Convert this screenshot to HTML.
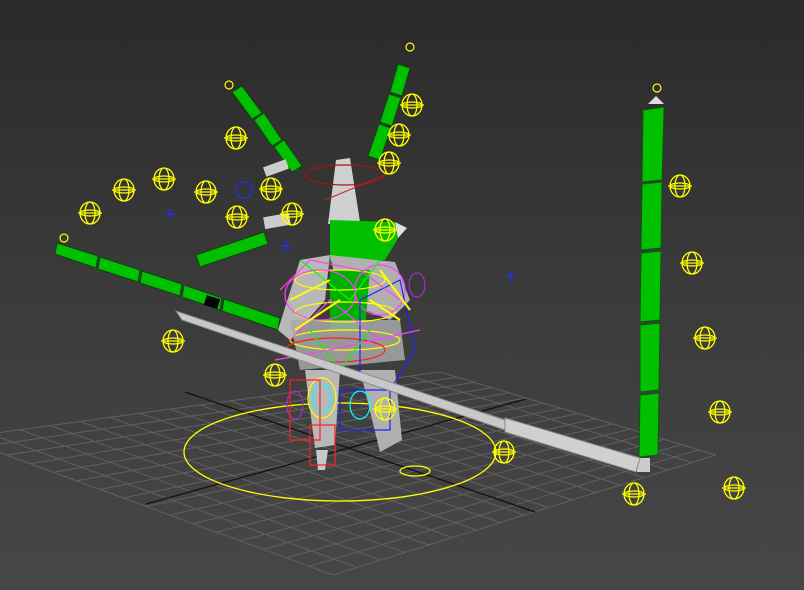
<!DOCTYPE html>
<html><head><meta charset="utf-8"><style>
html,body{margin:0;padding:0;width:804px;height:590px;overflow:hidden;background:#3a3a3a}
svg{display:block}
</style></head><body>
<svg id="s" width="804" height="590" viewBox="0 0 804 590" xmlns="http://www.w3.org/2000/svg">
<defs>
<linearGradient id="bg" x1="0" y1="0" x2="0" y2="1">
<stop offset="0" stop-color="#2a2a2a"/><stop offset="0.5" stop-color="#3b3b3b"/><stop offset="1" stop-color="#474747"/>
</linearGradient>
<g id="giz" fill="none" stroke="#ffff00" stroke-width="1.3">
<ellipse cx="0" cy="0" rx="10" ry="11"/><ellipse cx="0" cy="0" rx="5" ry="11"/><line x1="-12" y1="0" x2="12" y2="0"/><ellipse cx="0" cy="0" rx="10" ry="3"/>
</g>
</defs>
<rect width="804" height="590" fill="url(#bg)"/>
<g id="grid" stroke="#606060" stroke-width="1" fill="none"></g>
<path d="M146 504 L526 399 M185 392 L535 512" stroke="#111" stroke-width="1.3"/>
<!-- floor ellipse -->
<ellipse cx="340" cy="452" rx="156" ry="49" fill="none" stroke="#ffff00" stroke-width="1.3"/>
<ellipse cx="415" cy="471" rx="15" ry="5" fill="none" stroke="#ffff00" stroke-width="1.3"/>
<!-- right pole -->
<g fill="#00c000" stroke="#0a5a0a" stroke-width="1">
<path d="M643 110 L664 107 L662 180 L642 182 Z"/>
<path d="M642 184 L662 182 L661 248 L641 250 Z"/>
<path d="M641 253 L661 251 L660 320 L640 322 Z"/>
<path d="M640 325 L660 323 L659 390 L640 392 Z"/>
<path d="M640 395 L659 393 L658 455 L639 457 Z"/>
</g>
<path d="M648 104 L656 96 L664 104 Z" fill="#ddd"/>
<rect x="637" y="458" width="13" height="14" fill="#ccc"/>
<!-- left green bar -->
<g fill="#00c000" stroke="#0a4a0a">
<path d="M57 243 L98 256 L96 268 L55 254 Z"/>
<path d="M100 257 L140 270 L138 282 L98 269 Z"/>
<path d="M142 271 L182 284 L180 296 L140 283 Z"/>
<path d="M184 285 L222 298 L220 310 L182 297 Z"/>
<path d="M224 299 L280 318 L278 330 L222 311 Z"/>
</g>
<rect x="205" y="297" width="14" height="10" fill="#000" transform="rotate(18 212 302)"/>
<!-- upper left green -->
<g fill="#00c000" stroke="#0a4a0a">
<path d="M232 92 L242 86 L262 113 L252 119 Z"/>
<path d="M254 120 L264 113 L282 140 L272 146 Z"/>
<path d="M274 147 L284 140 L302 166 L292 172 Z"/>
<path d="M196 255 L264 232 L268 244 L200 267 Z"/>
</g>
<rect x="264" y="163" width="24" height="10" fill="#ccc" transform="rotate(-20 276 168)"/>
<rect x="264" y="215" width="26" height="12" fill="#ccc" transform="rotate(-10 277 221)"/>
<!-- upper right green -->
<g fill="#00c000" stroke="#0a4a0a">
<path d="M398 64 L410 68 L402 96 L390 92 Z"/>
<path d="M389 94 L401 98 L392 126 L380 122 Z"/>
<path d="M379 124 L391 128 L380 160 L368 156 Z"/>
</g>
<!-- character -->
<path d="M336 160 L350 158 L360 222 L328 224 Z" fill="#d0d0d0"/>
<path d="M330 220 L395 222 L400 235 L385 260 L330 262 Z" fill="#00c000"/>
<path d="M395 222 L407 228 L398 238 Z" fill="#e0e0e0"/>
<path d="M300 260 L330 255 L325 300 L290 340 L278 330 Z" fill="#b8b8b8"/>
<path d="M330 255 L395 262 L410 300 L390 320 L340 300 Z" fill="#b0b0b0"/>
<path d="M330 270 L370 270 L365 330 L330 330 Z" fill="#00b000"/>
<path d="M290 320 L400 320 L405 360 L300 370 Z" fill="#a8a8a8" opacity="0.85"/>
<path d="M305 370 L340 370 L335 445 L315 448 Z" fill="#b8b8b8"/>
<path d="M360 370 L395 370 L402 440 L380 452 Z" fill="#b0b0b0"/>
<path d="M316 450 L328 450 L325 470 L318 470 Z" fill="#c8c8c8"/>
<g fill="none" stroke-width="1.2">
<ellipse cx="340" cy="280" rx="45" ry="10" stroke="#ffff00"/>
<ellipse cx="345" cy="312" rx="50" ry="10" stroke="#ffff00"/>
<ellipse cx="345" cy="340" rx="55" ry="10" stroke="#ffff00"/>
<ellipse cx="345" cy="175" rx="40" ry="10" stroke="#b01010"/>
<ellipse cx="335" cy="350" rx="50" ry="12" stroke="#ff2020"/>
<ellipse cx="320" cy="295" rx="35" ry="25" stroke="#ff40ff"/>
<ellipse cx="380" cy="290" rx="25" ry="25" stroke="#ff40ff"/>
<ellipse cx="322" cy="398" rx="14" ry="20" stroke="#ffff00"/>
<ellipse cx="322" cy="398" rx="9" ry="14" stroke="#00ffff"/>
<ellipse cx="360" cy="405" rx="10" ry="14" stroke="#00ffff"/>
<ellipse cx="295" cy="405" rx="8" ry="14" stroke="#a030c0"/>
<ellipse cx="417" cy="285" rx="8" ry="12" stroke="#a030c0"/>
<rect x="290" y="380" width="30" height="60" stroke="#ff2020"/>
<rect x="310" y="425" width="25" height="40" stroke="#ff2020"/>
<rect x="340" y="390" width="50" height="40" stroke="#2020ff"/>
<path d="M360 300 L400 280 L415 350 L390 390 L360 380 Z" stroke="#2020ff"/>
<path d="M280 290 L310 260 L360 270 L400 300 M290 340 L330 300 L380 340 M275 360 L330 350 L420 330" stroke="#ff40ff"/>
<path d="M300 260 L350 300 L380 260 M310 330 L340 370 L370 330" stroke="#00ff00"/>
<path d="M290 300 L330 280 M295 330 L340 300 M370 300 L400 320 M380 270 L410 310" stroke="#ffff00" stroke-width="2"/>
<circle cx="244" cy="190" r="8" stroke="#2030ff"/>
<path d="M165 214 h10 M170 209 v10 M280 246 h12 M286 240 v12 M506 276 h10 M511 271 v10" stroke="#2030ff"/>
</g>
<path d="M325 200 L385 175" stroke="#c02020" fill="none"/>
<!-- long staff -->
<path d="M176 311 L182 320 L505 430 L505 420 Z" fill="#c8c8c8" stroke="#888"/>
<path d="M505 418 L640 458 L636 472 L505 432 Z" fill="#d0d0d0" stroke="#888"/>
<!-- gizmos -->
<use href="#giz" x="124" y="190"/><use href="#giz" x="164" y="179"/><use href="#giz" x="206" y="192"/>
<use href="#giz" x="237" y="217"/><use href="#giz" x="90" y="213"/><use href="#giz" x="271" y="189"/>
<use href="#giz" x="292" y="214"/><use href="#giz" x="236" y="138"/><use href="#giz" x="389" y="163"/>
<use href="#giz" x="399" y="135"/><use href="#giz" x="412" y="105"/><use href="#giz" x="385" y="409"/>
<use href="#giz" x="173" y="341"/><use href="#giz" x="275" y="375"/><use href="#giz" x="680" y="186"/>
<use href="#giz" x="692" y="263"/><use href="#giz" x="705" y="338"/><use href="#giz" x="720" y="412"/>
<use href="#giz" x="734" y="488"/><use href="#giz" x="634" y="494"/><use href="#giz" x="504" y="452"/>
<use href="#giz" x="385" y="230"/>
<g fill="none" stroke="#ffff00" stroke-width="1.2">
<circle cx="410" cy="47" r="4"/><circle cx="229" cy="85" r="4"/><circle cx="657" cy="88" r="4"/><circle cx="64" cy="238" r="4"/>
</g>
</svg>
<script>
(function(){
var g=document.getElementById('grid');
var L=[-40,438],F=[333,575],R=[716,455],B=[440,372];
function p(u,v){
var x=(1-u)*(1-v)*B[0]+u*(1-v)*R[0]+u*v*F[0]+(1-u)*v*L[0];
var y=(1-u)*(1-v)*B[1]+u*(1-v)*R[1]+u*v*F[1]+(1-u)*v*L[1];
return x.toFixed(1)+' '+y.toFixed(1);}
var N=16,d='';
for(var i=0;i<=N;i++){var t=i/N;d+='M'+p(t,0)+' L'+p(t,1)+' M'+p(0,t)+' L'+p(1,t)+' ';}
var e=document.createElementNS('http://www.w3.org/2000/svg','path');e.setAttribute('d',d);g.appendChild(e);
})();
</script>
</body></html>
